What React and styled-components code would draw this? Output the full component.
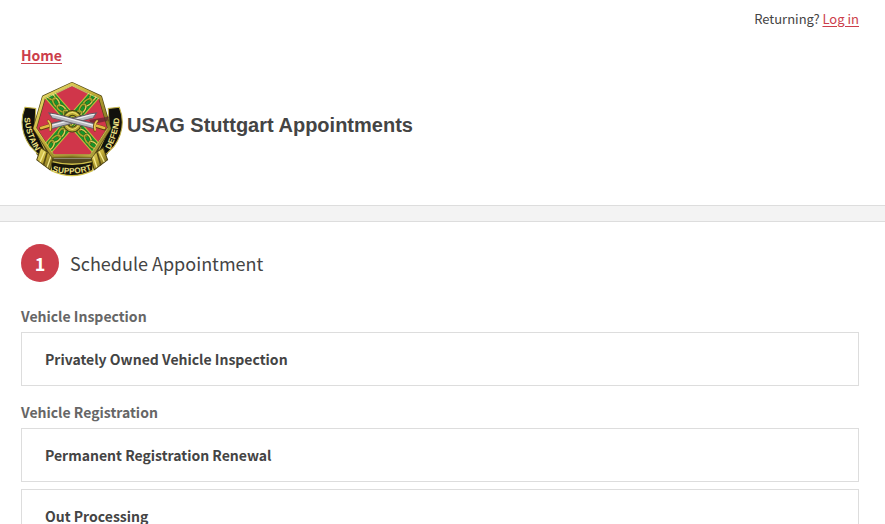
import React from "react";
import styled, { createGlobalStyle } from "styled-components";

const GlobalStyle = createGlobalStyle`
  *, *::before, *::after { box-sizing: border-box; }
  body {
    margin: 0;
    background: #fff;
    color: #444;
    font-family: "Noto Sans CJK SC", "Open Sans", sans-serif;
    font-size: 14px;
    line-height: 24px;
  }
`;

const Header = styled.header`
  display: flex;
  flex-direction: column;
  padding: 7px 26px 28px 21px;
`;

const Account = styled.p`
  margin: 0;
  align-self: flex-end;
  font-size: 13px;
`;

const TextLink = styled.a`
  color: #cc3e4b;
  font-weight: ${(p) => (p.$strong ? 700 : 400)};
  text-decoration: underline;
  text-underline-offset: 2px;
`;

const Nav = styled.nav`
  margin-top: 12px;
`;

const Brand = styled.div`
  display: flex;
  align-items: center;
  gap: 4px;
  margin-top: 14px;
`;

const BrandName = styled.h1`
  margin: 0 0 8px;
  font-family: "Liberation Sans", Arial, sans-serif;
  font-size: 20px;
  line-height: 24px;
  font-weight: 700;
`;

const Emblem = styled.svg`
  flex: none;
  display: block;
  width: 102px;
  height: 96px;
`;

const Divider = styled.div`
  height: 17px;
  background: #f3f3f3;
  border: solid #ddd;
  border-width: 1px 0;
`;

const Main = styled.main`
  padding: 22px 26px 24px 21px;
`;

const StepHeading = styled.h2`
  display: flex;
  align-items: center;
  gap: 11px;
  margin: 0 0 22px;
  font-size: 18px;
  font-weight: 400;
`;

const StepNumber = styled.span`
  display: flex;
  align-items: center;
  justify-content: center;
  width: 38px;
  height: 38px;
  border-radius: 50%;
  background: #cc3e4b;
  color: #fff;
  font-weight: 700;
`;

const Group = styled.section`
  margin-bottom: 14px;
`;

const GroupTitle = styled.h3`
  margin: 0 0 4px;
  color: #666;
  font-size: 14px;
  line-height: 24px;
  font-weight: 700;
`;

const OptionList = styled.div`
  display: grid;
  gap: 7px;
`;

const Option = styled.button`
  width: 100%;
  padding: 14px 23px;
  border: 1px solid #ddd;
  background: #fff;
  color: #444;
  font: inherit;
  font-size: 14px;
  line-height: 24px;
  font-weight: 700;
  text-align: left;
  cursor: pointer;
`;

const groups = [
  { title: "Vehicle Inspection", options: ["Privately Owned Vehicle Inspection"] },
  { title: "Vehicle Registration", options: ["Permanent Registration Renewal", "Out Processing"] },
];

const links = [0, 1, 2, 3, 4, 5, 6, 7, 8];

function Chain({ angle }) {
  return (
    <g transform={`translate(173 137) rotate(${angle})`}>
      <rect x="-122" y="-16" width="244" height="32" fill="#17952b" stroke="#c9b63b" strokeWidth="3" />
      {links.map((i) => (
        <g key={i} transform={`translate(${(i - 4) * 24} 0) rotate(${i % 2 ? 14 : -14})`} fill="none">
          <ellipse rx="14" ry="8" stroke="#34480e" strokeWidth="7" />
          <ellipse rx="14" ry="8" stroke="#a9aa30" strokeWidth="5" />
          <path d="M-12-5Q0-12 12-5" stroke="#ece780" strokeWidth="2" />
        </g>
      ))}
    </g>
  );
}

function Sword({ flip }) {
  return (
    <g transform={flip ? "translate(350 0) scale(-1 1)" : undefined}>
      <path d="M103 148L225 117L246 114L236 129L111 161Z" fill="#b9bac0" stroke="#625c65" strokeWidth="3" />
      <path d="M113 151L225 121L240 118" fill="none" stroke="#f5f5f6" strokeWidth="3" />
      <path d="M81 160L108 152" stroke="#5b410c" strokeWidth="12" strokeLinecap="round" />
      <path d="M81 159L108 151" stroke="#e3b943" strokeWidth="8" strokeLinecap="round" />
      <path d="M102 138Q113 147 109 166" fill="none" stroke="#74510c" strokeWidth="8" strokeLinecap="round" />
      <path d="M102 138Q112 147 108 165" fill="none" stroke="#efcb57" strokeWidth="5" strokeLinecap="round" />
    </g>
  );
}

function GarrisonEmblem() {
  const shield = "M173 28L257 67L284 160L230 243H116L62 160L89 67Z";
  return (
    <Emblem viewBox="21 19 304 286" role="img" aria-label="Sustain Support Defend emblem">
      <defs>
        <linearGradient id="gold" x1="0" y1="0" x2="1" y2="1">
          <stop offset="0" stopColor="#f1e675" />
          <stop offset=".45" stopColor="#c3ad37" />
          <stop offset=".75" stopColor="#857622" />
          <stop offset="1" stopColor="#d6c653" />
        </linearGradient>
        <clipPath id="shieldClip"><path d={shield} /></clipPath>
        <path id="leftMotto" d="M37 112Q36 180 80 238" />
        <path id="bottomMotto" d="M108 279Q173 300 238 275" />
        <path id="rightMotto" d="M279 236Q312 184 316 115" />
      </defs>
      <path d="M64 166L118 250H229L285 165L280 236L228 279L173 288L113 279L67 237Z" fill="#51471d" />
      <path d="M33 97L65 101L62 160L92 224L81 246L49 214Q9 157 33 97Z" fill="#11110c" stroke="#c0b045" strokeWidth="3" />
      <path d="M314 97L281 101L284 160L254 224L266 246L298 214Q338 157 314 97Z" fill="#11110c" stroke="#c0b045" strokeWidth="3" />
      <path d="M107 258Q173 276 239 258L234 286Q173 316 112 286Z" fill="#17150a" stroke="#d1c14a" strokeWidth="4" />
      <path d="M80 218L118 242L108 284L68 254Z" fill="url(#gold)" stroke="#4e4312" strokeWidth="3" />
      <path d="M266 218L229 242L239 284L279 254Z" fill="url(#gold)" stroke="#4e4312" strokeWidth="3" />
      <path d="M99 232L88 270M248 232L259 270" stroke="#584b13" strokeWidth="5" />
      <path d="M91 229L78 260M111 241L99 276M254 229L269 260M236 241L247 276" stroke="#f4e98d" strokeWidth="4" />
      <path d={shield} fill="#d0364a" stroke="#504715" strokeWidth="12" strokeLinejoin="round" />
      <g clipPath="url(#shieldClip)">
        <Chain angle={49} />
        <Chain angle={131} />
      </g>
      <path d={shield} fill="none" stroke="url(#gold)" strokeWidth="8" strokeLinejoin="round" />
      <path d="M94 71L173 33L252 71" fill="none" stroke="#fff6a1" strokeWidth="2" />
      <path d="M66 160L119 239H227L279 160" fill="none" stroke="#f0df66" strokeWidth="2" />
      <ellipse cx="174" cy="139" rx="22" ry="25" fill="none" stroke="#454011" strokeWidth="17" />
      <ellipse cx="174" cy="139" rx="22" ry="25" fill="none" stroke="#b6a632" strokeWidth="11" />
      <path d="M156 121Q174 104 192 121M156 153Q174 174 192 153" fill="none" stroke="#ede06e" strokeWidth="3" />
      <path d="M224 135L284 125L278 138L232 148Z" fill="#5d2430" opacity=".7" />
      <Sword />
      <Sword flip />
      <g fill="#efe284" fontFamily="Liberation Sans, Arial, sans-serif" fontSize="24" fontWeight="700">
        <text><textPath href="#leftMotto" startOffset="50%" textAnchor="middle" dominantBaseline="middle">SUSTAIN</textPath></text>
        <text><textPath href="#bottomMotto" startOffset="50%" textAnchor="middle" dominantBaseline="middle">SUPPORT</textPath></text>
        <text><textPath href="#rightMotto" startOffset="50%" textAnchor="middle">DEFEND</textPath></text>
      </g>
    </Emblem>
  );
}

export default function App() {
  return (
    <>
      <GlobalStyle />
      <Header>
        <Account>Returning? <TextLink href="#login">Log in</TextLink></Account>
        <Nav><TextLink href="#home" $strong>Home</TextLink></Nav>
        <Brand>
          <GarrisonEmblem />
          <BrandName>USAG Stuttgart Appointments</BrandName>
        </Brand>
      </Header>
      <Divider />
      <Main>
        <StepHeading><StepNumber>1</StepNumber>Schedule Appointment</StepHeading>
        {groups.map((group) => (
          <Group key={group.title}>
            <GroupTitle>{group.title}</GroupTitle>
            <OptionList>
              {group.options.map((option) => <Option type="button" key={option}>{option}</Option>)}
            </OptionList>
          </Group>
        ))}
      </Main>
    </>
  );
}
